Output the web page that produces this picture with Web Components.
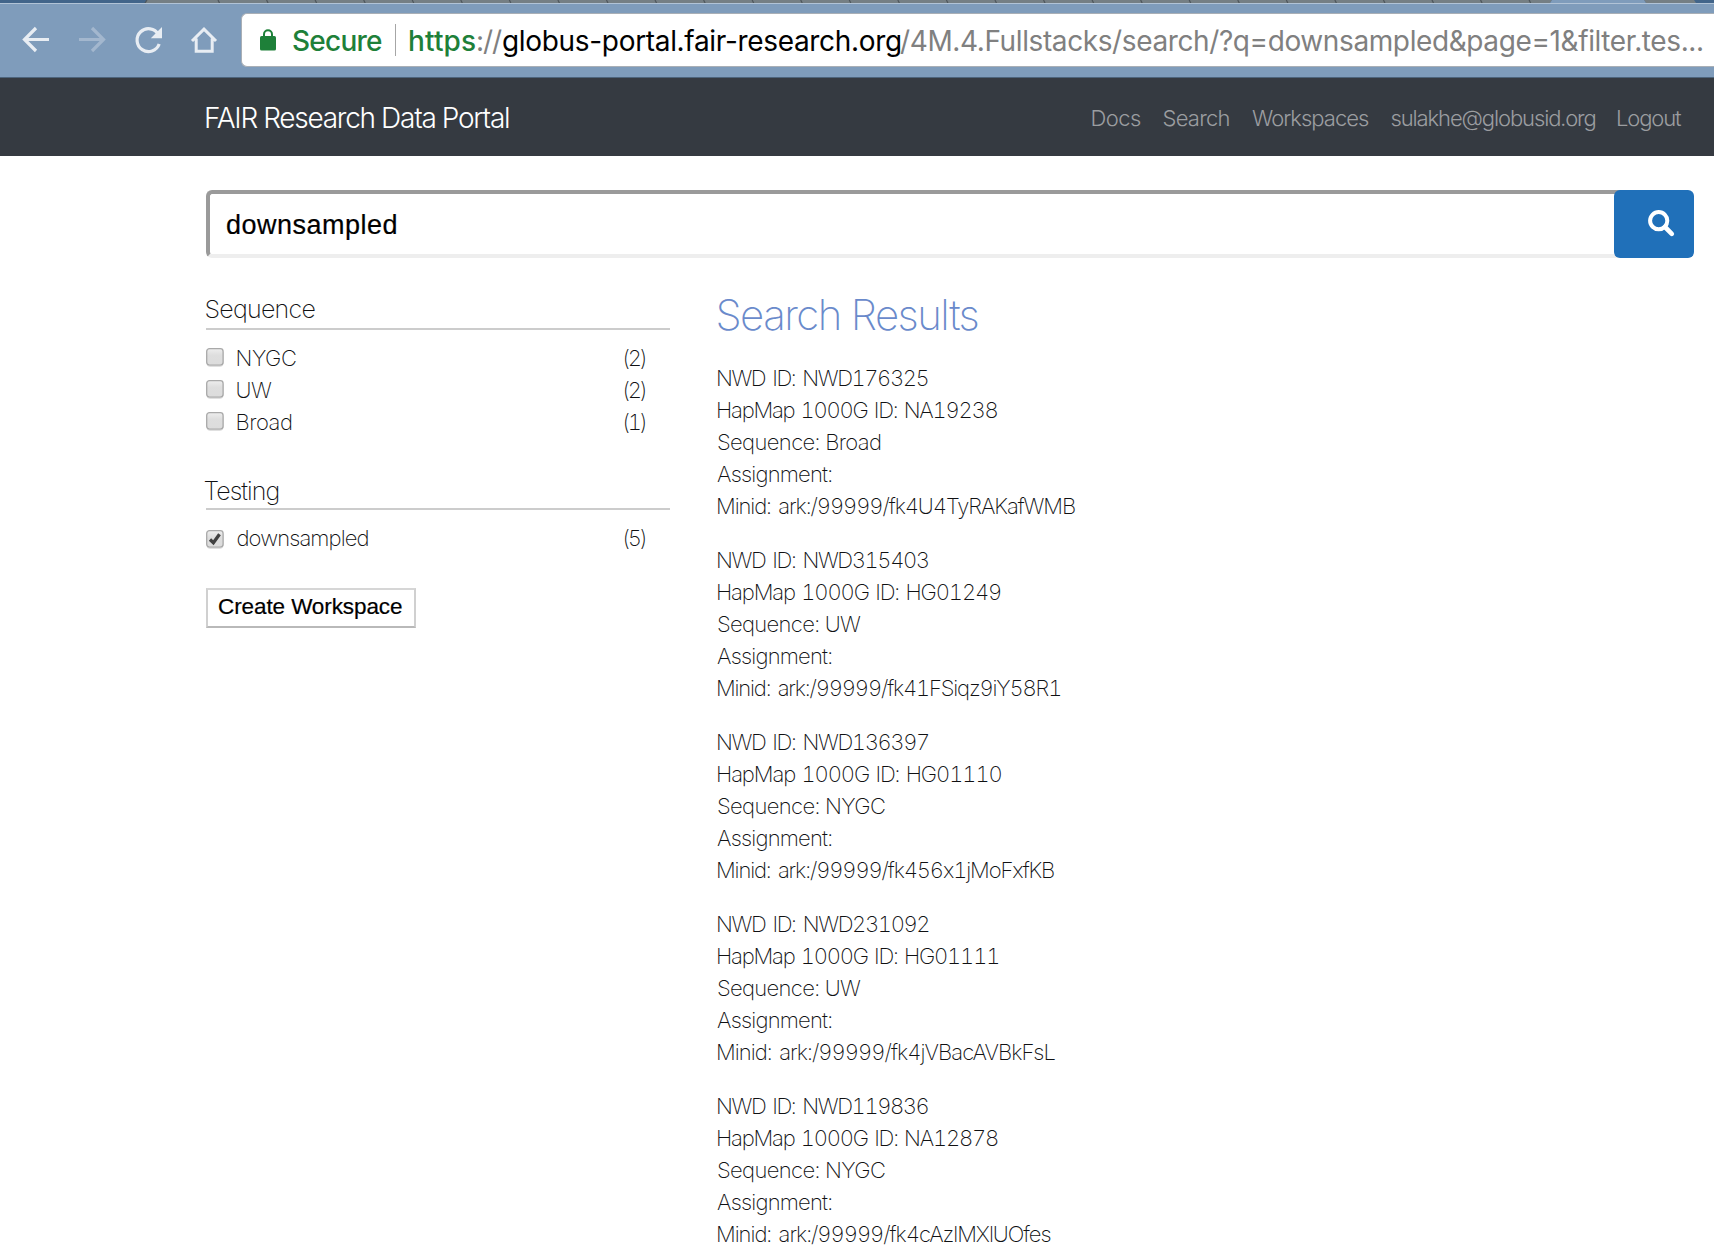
<!DOCTYPE html>
<html lang="en">
<head>
<meta charset="utf-8">
<title>FAIR Research Data Portal</title>
<style>
  html, body { margin: 0; height: 100%; background: #fff; overflow: hidden; }
  body { font-family: Inter, "Liberation Sans", sans-serif; font-size: 22px; line-height: 32px; font-weight: 200; color: #101113; }
</style>
</head>
<body>
<portal-app></portal-app>
<script>
const define = (name, html, setup) => {
  const template = document.createElement('template');
  template.innerHTML = html;
  customElements.define(name, class extends HTMLElement {
    connectedCallback() {
      if (this.shadowRoot) return;
      const root = this.attachShadow({ mode: 'open' });
      root.append(template.content.cloneNode(true));
      if (setup) setup(this, root);
    }
  });
};

// Text tracked so that its ink spans exactly the width given in "w".
const pen = document.createElement('canvas').getContext('2d');
define('fit-text', `<style>:host{display:inline-block;flex:none;white-space:pre;font-kerning:normal;font-variant-numeric:tabular-nums}</style><slot></slot>`, host => {
  const cs = getComputedStyle(host);
  pen.font = `${cs.fontWeight} ${cs.fontSize} ${cs.fontFamily}`;
  const text = host.textContent;
  const m = pen.measureText(text);
  const w = Number(host.getAttribute('w'));
  const range = document.createRange();
  range.selectNodeContents(host);
  const bearings = m.width - m.actualBoundingBoxLeft - m.actualBoundingBoxRight;
  const ink = range.getBoundingClientRect().width - bearings;
  host.style.letterSpacing = ((w - ink) / (text.length - 1)).toFixed(3) + 'px';
  host.style.marginLeft = m.actualBoundingBoxLeft.toFixed(2) + 'px';
  host.style.width = (w - m.actualBoundingBoxLeft).toFixed(2) + 'px';
});

define('tab-strip', `<style>
  :host{display:block;height:3px;background:#42658a}
  svg{display:block}
</style><svg width="1714" height="3"></svg>`, (host, root) => {
  let s = '<path d="M145 3L147 0H1552L1550 3zM1646 3L1644 0H1694L1696 3z" fill="#757f84"/><path d="M1550 3L1552 0H1644L1646 3z" fill="#7f9cbb"/><g stroke="#4e565b" stroke-width="1.2"><path d="M145 3L147 0"/>';
  for (let i = 0; i < 28; i++) { const x = 218.5 + i * 48.56; s += `<path d="M${x - .5} 0L${x + 1} 3"/>`; }
  root.querySelector('svg').innerHTML = s + '</g>';
});

define('browser-bar', `<style>
  :host{display:flex;box-sizing:border-box;height:75px;background:#7f9cbb;border-top:1px solid #b1c3d6;border-bottom:1px solid #4d647c;padding:9px 0 10px;overflow:hidden}
  .icons{flex:none;width:241px;height:54px}
  .url{flex:1;display:flex;align-items:center;box-sizing:border-box;height:54px;background:#fff;border:1px solid #a9afb6;border-right:0;border-radius:6px 0 0 6px;font-size:28px;font-weight:400;line-height:34px;color:#808080}
  .url svg{flex:none;margin:0 16px 0 17px}
  .url div{padding-top:2px;white-space:nowrap}
  .url fit-text{font-variant-numeric:normal}
  .safe{color:#1e8039;font-weight:500}
  i{flex:none;width:1px;height:32px;background:#a6a6a6;margin:0 14px 0 13px}
  .scheme{color:#1e8039;font-weight:500}.host{color:#000}
</style>
<svg class="icons" viewBox="0 13 241 54" fill="none" stroke="#e8edf3" stroke-width="3.2">
  <path d="M49 39.5H25M36 28L24.5 39.5L36 51" stroke-linecap="butt"/>
  <path d="M79 39.5H103M92 28L103.5 39.5L92 51" stroke="#a3b7ce"/>
  <path d="M158.4 34.5A11.4 11.4 0 1 0 159.2 44"/>
  <path d="M162 27V38.2H150.8z" fill="#e8edf3" stroke="none"/>
  <path d="M192 41L204 29.2L216 41M196.2 38.5V51.2H212.2V38.5" stroke-width="3"/>
</svg>
<div class="url" style="padding-top:0">
  <svg width="18" height="24" viewBox="0 0 18 24"><rect x="1" y="8" width="16" height="14.500" rx="1.6" fill="#1e8039"/><path d="M5 10V6.200a4 4 0 0 1 8 0V10" fill="none" stroke="#1e8039" stroke-width="2"/></svg>
  <div><fit-text class="safe" w="89">Secure</fit-text></div><i></i><div><fit-text class="scheme" w="65">https</fit-text><fit-text w="24" style="padding-left:3px;padding-right:1px">://</fit-text><fit-text class="host" w="397">globus-portal.fair-research.org</fit-text><fit-text w="802">/4M.4.Fullstacks/search/?q=downsampled&amp;page=1&amp;filter.tes...</fit-text></div>
</div>`);

define('nav-bar', `<style>
  :host{display:flex;justify-content:space-between;align-items:center;box-sizing:border-box;height:78px;background:#353a41;padding:2px 32px 0 206px;color:#fff}
  .brand{font-size:28px;font-weight:300;line-height:40px}
  nav{display:flex;gap:22.500px;color:#9b9da0;font-weight:300}
</style>
<fit-text class="brand" w="303">FAIR Research Data Portal</fit-text>
<nav><fit-text w="48.500">Docs</fit-text><fit-text w="66">Search</fit-text><fit-text w="117">Workspaces</fit-text><fit-text w="204">sulakhe@globusid.org</fit-text><fit-text w="64">Logout</fit-text></nav>`);

define('search-box', `<style>
  :host{display:flex;height:68px}
  .field{flex:1;box-sizing:border-box;border:4px solid;border-color:#9a9a9a #eee #eee #9a9a9a;border-right:0;border-radius:6px 0 0 6px;padding:14px 16px 12px 17px;font:400 27px/34px "Liberation Sans",sans-serif;color:#000;-webkit-text-stroke:.2px #000}
  .go{width:80px;background:linear-gradient(#9a9a9a 0 4px,#fff 4px 64px,#eee 64px) no-repeat 0 0/20px 100%}
  .go svg{display:block;background:#2070b9;border-radius:6px}
</style>
<div class="field"><fit-text w="169.500">downsampled</fit-text></div>
<div class="go"><svg width="80" height="68" fill="none" stroke="#fff"><circle cx="44.700" cy="30.700" r="8.600" stroke-width="4"/><path d="M51 37L57.800 43.800" stroke-width="4.600" stroke-linecap="round"/></svg></div>`);

define('facet-group', `<style>
  :host{display:block}
  h2{margin:0 0 12px;height:var(--head,34px);border-bottom:2px solid #ccc;font-size:25px;font-weight:200;line-height:30px}
</style><h2><slot name="title"></slot></h2><slot></slot>`);

define('facet-item', `<style>
  :host{display:flex;height:32px;padding-right:24px}
  svg{flex:none;margin:5px 12.500px 0 -1px}
  :host([checked]) svg{margin-top:7px}
  .tick{display:none}:host([checked]) .tick{display:block}
  .label{flex:1}
</style>
<svg width="20" height="21"><defs><linearGradient id="g" x2="0" y2="1"><stop stop-color="#eee"/><stop offset=".4" stop-color="#dedede"/><stop offset="1" stop-color="#dcdcdc"/></linearGradient></defs>
<rect x="2" y="3" width="16" height="16.500" rx="3" fill="none" stroke="#000" stroke-opacity=".12"/>
<rect x="1.700" y="1.700" width="16.400" height="16.400" rx="2.800" fill="url(#g)" stroke="#a9a9a9" stroke-width="1.300"/>
<path class="tick" d="M5 10.500L8.400 13.700L14.500 5.300" fill="none" stroke="#404040" stroke-width="3.300"/></svg>
<div class="label"><slot></slot></div><slot name="count"></slot>`);

define('plain-button', `<style>
  :host{display:block;width:210px}
  button{display:block;box-sizing:border-box;width:210px;height:40px;margin:0;padding:0 0 2px 11px;text-align:left;background:#fff;border:2px solid;border-color:#d6d6d6 #d0d0d0 #b9b9b9 #d0d0d0;font:400 22.500px/34px "Liberation Sans",sans-serif;color:#000;-webkit-text-stroke:.2px #000}
</style><button><slot></slot></button>`);

define('result-record', `<style>
  :host{display:flex;flex-direction:column;height:160px}
  .l0,.l4{word-spacing:2.500px}.l1{word-spacing:1.500px}.l3{text-indent:-1px}
</style>`, (host, root) => {
  const a = n => host.getAttribute(n);
  const widths = a('w').split(' ');
  [`NWD ID: ${a('nwd')}`, `HapMap 1000G ID: ${a('hapmap')}`, `Sequence: ${a('seq')}`, 'Assignment:', `Minid: ark:/99999/${a('minid')}`].forEach((text, i) => {
    const line = document.createElement('fit-text');
    line.className = 'l' + i;
    line.setAttribute('w', widths[i]);
    line.textContent = text;
    root.append(line);
  });
});

define('portal-app', `<style>
  :host{display:block}
  main{padding:34px 20px 0 206px}
  .columns{display:flex;gap:48px;margin-top:32px}
  aside{width:464px;padding-top:4px}
  h1{margin:0 0 22px;font-size:42px;line-height:50px;font-weight:200;color:#6a8acb}
  .results{display:flex;flex-direction:column;gap:22px}
</style>
<tab-strip></tab-strip><browser-bar></browser-bar><nav-bar></nav-bar>
<main>
  <search-box></search-box>
  <div class="columns">
    <aside>
      <facet-group><fit-text slot="title" w="109" style="text-indent:-.5px">Sequence</fit-text>
        <facet-item><fit-text w="58.500">NYGC</fit-text><fit-text slot="count" w="22.500">(2)</fit-text></facet-item>
        <facet-item><fit-text w="34.500">UW</fit-text><fit-text slot="count" w="22.500">(2)</fit-text></facet-item>
        <facet-item><fit-text w="54.500">Broad</fit-text><fit-text slot="count" w="22.500">(1)</fit-text></facet-item>
      </facet-group>
      <facet-group style="margin-top:38px;--head:32px"><fit-text slot="title" w="74" style="text-indent:-1.500px">Testing</fit-text>
        <facet-item checked><fit-text w="131">downsampled</fit-text><fit-text slot="count" w="22.500">(5)</fit-text></facet-item>
      </facet-group>
      <plain-button style="margin-top:34px"><fit-text w="183">Create Workspace</fit-text></plain-button>
    </aside>
    <section>
      <h1><fit-text w="260" style="text-indent:-.5px">Search Results</fit-text></h1>
      <div class="results">
        <result-record nwd="NWD176325" hapmap="NA19238" seq="Broad" minid="fk4U4TyRAKafWMB" w="211 279.500 163 114 357"></result-record>
        <result-record nwd="NWD315403" hapmap="HG01249" seq="UW" minid="fk41FSiqz9iY58R1" w="211 283.500 143 114 343"></result-record>
        <result-record nwd="NWD136397" hapmap="HG01110" seq="NYGC" minid="fk456x1jMoFxfKB" w="211 283.500 167 114 339"></result-record>
        <result-record nwd="NWD231092" hapmap="HG01111" seq="UW" minid="fk4jVBacAVBkFsL" w="211 281 143 114 337.500"></result-record>
        <result-record nwd="NWD119836" hapmap="NA12878" seq="NYGC" minid="fk4cAzlMXlUOfes" w="211 280 167 114 332.500"></result-record>
      </div>
    </section>
  </div>
</main>`);
</script>
</body>
</html>
